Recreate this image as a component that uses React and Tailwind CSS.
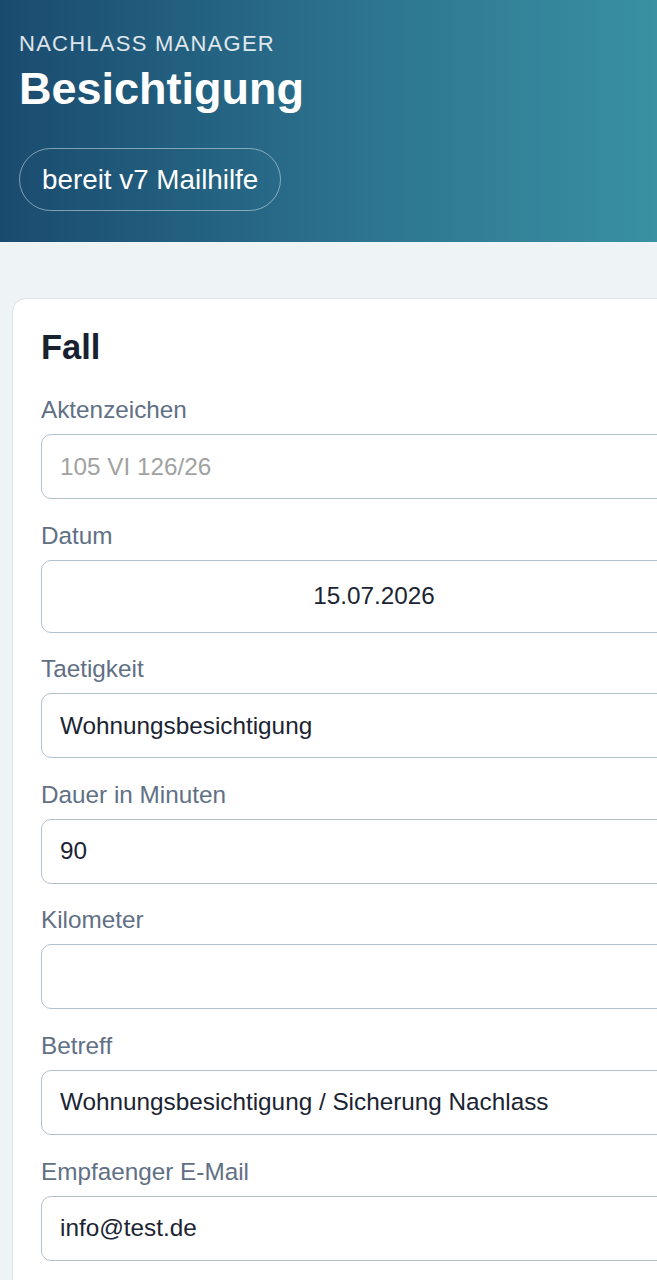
import { useState } from 'react';

const fields = [
    { label: 'Aktenzeichen', value: '', placeholder: '105 VI 126/26' },
    { label: 'Datum', value: '15.07.2026', date: true },
    { label: 'Taetigkeit', value: 'Wohnungsbesichtigung' },
    { label: 'Dauer in Minuten', value: '90' },
    { label: 'Kilometer', value: '' },
    { label: 'Betreff', value: 'Wohnungsbesichtigung / Sicherung Nachlass' },
    { label: 'Empfaenger E-Mail', value: 'info@test.de' },
];

const Field = ({ label, value, placeholder, date }) => {
    const [val, setVal] = useState(value);
    return (
        <label className="flex flex-col">
            <span className="text-[24.3px] leading-[30px] text-[#617085] mb-[9px]">{label}</span>
            <input
                value={val}
                placeholder={placeholder}
                onChange={(e) => setVal(e.target.value)}
                className={
                    date
                        ? 'h-[73px] w-full rounded-[10px] border-[1.5px] border-[#b3c0cd] bg-white px-[18px] text-center text-[24.3px] text-[#1b2433] outline-none'
                        : 'h-[65px] w-full rounded-[10px] border-[1.5px] border-[#b3c0cd] bg-white px-[18px] text-[24.3px] text-[#1b2433] placeholder:text-[#a2a2a2] outline-none'
                }
            />
        </label>
    );
};

const App = () => {
    return (
        <div className="min-h-screen w-[748px] bg-[#eef3f6] font-['Liberation_Sans',Arial,sans-serif] antialiased">
            {/* Header */}
            <header className="bg-gradient-to-r from-[#1a4b6f] via-[#2d7590] to-[#3d9aa8] px-[19px] pt-[30px] pb-[31px] text-white">
                <div className="text-[22px] leading-[28px] tracking-[1.25px] text-white/85 mb-[5px]">NACHLASS MANAGER</div>
                <h1 className="text-[45px] leading-[52px] font-bold">Besichtigung</h1>
                <div className="mt-[33px] inline-flex h-[63px] items-center rounded-full border-[1.5px] border-white/45 px-[22px] text-[27.8px]">
                    bereit v7 Mailhilfe
                </div>
            </header>

            {/* Card */}
            <main className="px-[12px] pt-[56px]">
                <section className="rounded-[14px] border-[1.5px] border-[#dbe3ea] bg-white px-[28px] pt-[28px] pb-[40px]">
                    <h2 className="text-[34.5px] leading-[40px] font-bold text-[#172130] mb-[28px]">Fall</h2>
                    <div className="flex flex-col gap-[21.6px]">
                        {fields.map((f) => (
                            <Field key={f.label} {...f} />
                        ))}
                    </div>
                </section>
            </main>
        </div>
    );
};

export default App;
